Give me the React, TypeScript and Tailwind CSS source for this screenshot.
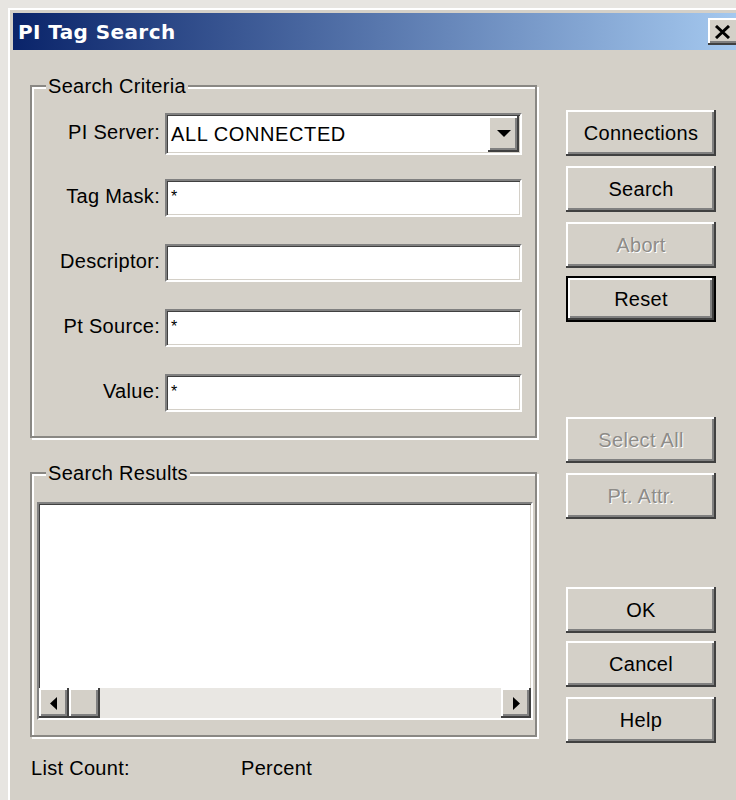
import React from "react";

// classic 3D bevels, drawn at double size
const raised =
  "shadow-[inset_-2px_-2px_0_#404040,inset_2px_2px_0_#ffffff,inset_-4px_-4px_0_#808080,inset_4px_4px_0_#d4d0c8]";
const sunken =
  "border-2 border-t-[#808080] border-l-[#808080] border-r-white border-b-white shadow-[inset_1px_1px_0_#404040,inset_-1px_-1px_0_#d4d0c8]";
const etched =
  "border-2 border-[#8a8884] shadow-[inset_2px_2px_0_#ffffff,2px_2px_0_#ffffff]";

function PushButton({
  label,
  disabled = false,
  primary = false,
  className = "",
}: {
  label: string;
  disabled?: boolean;
  primary?: boolean;
  className?: string;
}) {
  return (
    <div className={`h-[46px] w-[150px] ${primary ? "border-2 border-black" : ""} ${className}`}>
      <div
        className={`flex h-full w-full items-center justify-center bg-[#d4d0c8] ${raised} ${
          disabled ? "text-[#8e8c88] [text-shadow:1px_1px_0_#ffffff]" : "text-black"
        }`}
      >
        {label}
      </div>
    </div>
  );
}

function Field({ label, value = "" }: { label: string; value?: string }) {
  return (
    <div className="flex items-center">
      <span className="w-[130px] pb-[5px] pr-[2px] text-right">{label}</span>
      <div className={`ml-[3px] flex h-[38px] w-[357px] items-center bg-white pl-[4px] ${sunken}`}>
        <span className="pb-[3px] text-[16px] leading-none">{value}</span>
      </div>
    </div>
  );
}

function GroupBox({
  title,
  className,
  children,
}: {
  title: string;
  className: string;
  children: React.ReactNode;
}) {
  return (
    <fieldset className={`${etched} ${className}`}>
      <legend className="ml-[14px] bg-[#d4d0c8] px-[2px] leading-[22px]">{title}</legend>
      {children}
    </fieldset>
  );
}

function ScrollArrow({ dir }: { dir: "left" | "right" }) {
  return (
    <div className={`flex h-[30px] w-[30px] shrink-0 items-center justify-center bg-[#d4d0c8] ${raised}`}>
      <svg width="8" height="13" viewBox="0 0 8 13">
        <polygon points={dir === "left" ? "7,0 7,13 0,6.5" : "1,0 1,13 8,6.5"} fill="#000" />
      </svg>
    </div>
  );
}

export default function App() {
  return (
    <div className="h-[800px] w-[736px] overflow-hidden bg-[#e7e5e1] font-['Liberation_Sans',Arial,sans-serif] text-[20px] leading-[22px] tracking-[0.3px] text-black">
      <div className="ml-[8px] mt-[8px] h-[800px] w-[736px] border-l-2 border-t-2 border-white bg-[#d4d0c8] pl-[3px] pt-[3px]">
        {/* caption */}
        <div className="flex h-[37px] items-center bg-[linear-gradient(to_right,#0a246a,#a6caf0)] pl-[5px] pr-[4px]">
          <span className="font-['DejaVu_Sans',sans-serif] text-[20px] font-bold tracking-[0.4px] text-white">
            PI Tag Search
          </span>
          <div className={`ml-auto flex h-[27px] w-[32px] items-center justify-center pr-[4px] bg-[#d4d0c8] ${raised}`}>
            <svg width="17" height="14" viewBox="0 0 17 14">
              <path d="M2 1 L15 13 M15 1 L2 13" stroke="#000" strokeWidth="3" />
            </svg>
          </div>
        </div>

        {/* body */}
        <div className="flex pl-[17px]">
          <div className="w-[507px] pt-[25px]">
            <GroupBox title="Search Criteria" className="h-[363px] pt-[16px]">
              <div className="flex items-center">
                <span className="w-[130px] pb-[5px] pr-[2px] text-right">PI Server:</span>
                <div className={`ml-[3px] flex h-[42px] w-[357px] items-center bg-white p-[1px] ${sunken}`}>
                  <span className="flex-1 pl-[3px] tracking-[0.6px]">ALL CONNECTED</span>
                  <div className={`flex h-full w-[31px] items-center justify-center bg-[#d4d0c8] ${raised}`}>
                    <svg width="14" height="8" viewBox="0 0 14 8">
                      <polygon points="0,0 14,0 7,7" fill="#000" />
                    </svg>
                  </div>
                </div>
              </div>
              <div className="mt-[24px] flex flex-col gap-[27px]">
                <Field label="Tag Mask:" value="*" />
                <Field label="Descriptor:" />
                <Field label="Pt Source:" value="*" />
                <Field label="Value:" value="*" />
              </div>
            </GroupBox>

            <GroupBox title="Search Results" className="mt-[24px] h-[275px] pt-[18px]">
              <div className="pl-[5px]">
                <div className={`flex h-[218px] w-[496px] flex-col bg-white ${sunken}`}>
                  <div className="flex-1" />
                  <div className="flex h-[30px] bg-[#e9e7e3]">
                    <ScrollArrow dir="left" />
                    <div className={`h-[30px] w-[31px] bg-[#d4d0c8] ${raised}`} />
                    <div className="flex-1" />
                    <ScrollArrow dir="right" />
                  </div>
                </div>
              </div>
            </GroupBox>

            <div className="mt-[20px] flex pl-[1px]">
              <span className="w-[210px]">List Count:</span>
              <span>Percent</span>
            </div>
          </div>

          <div className="ml-[29px] flex flex-col pt-[60px]">
            <PushButton label="Connections" />
            <PushButton label="Search" className="mt-[10px]" />
            <PushButton label="Abort" disabled className="mt-[10px]" />
            <PushButton label="Reset" primary className="mt-[8px]" />
            <PushButton label="Select All" disabled className="mt-[95px]" />
            <PushButton label="Pt. Attr." disabled className="mt-[10px]" />
            <PushButton label="OK" className="mt-[68px]" />
            <PushButton label="Cancel" className="mt-[8px]" />
            <PushButton label="Help" className="mt-[10px]" />
          </div>
        </div>
      </div>
    </div>
  );
}
